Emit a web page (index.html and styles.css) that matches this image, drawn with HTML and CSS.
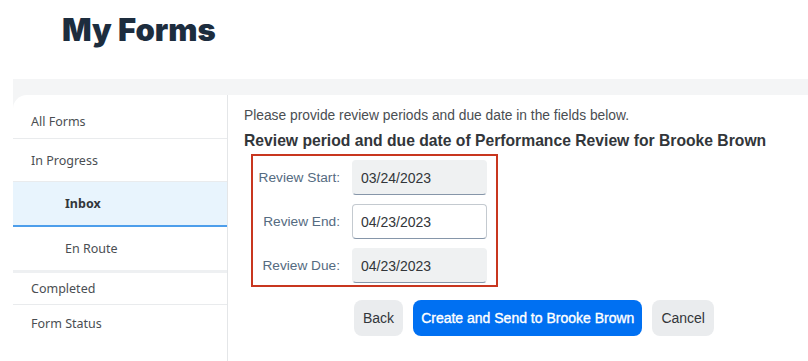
FILE: index.html
```html
<!DOCTYPE html>
<html lang="en">
<head>
    <meta charset="UTF-8">
    <meta name="viewport" content="width=device-width, initial-scale=1.0">
    <title>My Forms</title>
    <link rel="stylesheet" href="styles.css">
</head>
<body>
    <h1 class="page-title">My Forms</h1>

    <div class="page-band">
        <div class="panel">
            <!-- Left navigation -->
            <ul class="nav">
                <li class="nav-item all-forms">All Forms</li>
                <li class="nav-item in-progress">In Progress</li>
                <li class="nav-item sub active">Inbox</li>
                <li class="nav-item sub en-route">En Route</li>
                <li class="nav-item completed">Completed</li>
                <li class="nav-item form-status">Form Status</li>
            </ul>

            <!-- Form content -->
            <div class="content">
                <p class="intro">Please provide review periods and due date in the fields below.</p>
                <h2 class="form-heading">Review period and due date of Performance Review for Brooke Brown</h2>

                <div class="date-box">
                    <label class="field-label" for="start">Review Start:</label>
                    <input class="field readonly" id="start" type="text" value="03/24/2023" readonly>

                    <label class="field-label" for="end">Review End:</label>
                    <input class="field" id="end" type="text" value="04/23/2023">

                    <label class="field-label" for="due">Review Due:</label>
                    <input class="field readonly" id="due" type="text" value="04/23/2023" readonly>
                </div>

                <div class="actions">
                    <button class="btn">Back</button>
                    <button class="btn primary">Create and Send to Brooke Brown</button>
                    <button class="btn">Cancel</button>
                </div>
            </div>
        </div>
    </div>
</body>
</html>
```

FILE: styles.css
```css
body {
    font-family: "Liberation Sans", Arial, sans-serif;
    margin: 0;
    background: #fff;
    color: #32363a;
}
.page-title {
    margin: 0;
    padding: 10px 0 0 62px;
    height: 69px;
    box-sizing: border-box;
    font-family: Inter, "Liberation Sans", sans-serif;
    font-size: 31px;
    font-weight: 900;
    line-height: 40px;
    color: #1d2d3e;
}
.page-band {
    margin-top: 10px;
    margin-left: 13px;
    padding-top: 16px;
    background: #f4f5f6;
    height: 266px;
}
.panel {
    display: flex;
    background: #fff;
    border-top-left-radius: 14px;
    height: 100%;
}

/* navigation */
.nav {
    list-style: none;
    margin: 0;
    padding: 10px 0 0;
    width: 214px;
    border-right: 1px solid #e4e6e8;
    font-family: "Noto Sans", "Open Sans", sans-serif;
    font-size: 12.5px;
    color: #4a4e52;
}
.nav-item {
    display: flex;
    align-items: center;
    padding-left: 18px;
    border-bottom: 1px solid #e9ebed;
}
.nav-item.sub {
    padding-left: 52px;
}
.all-forms { height: 33px; }
.in-progress { height: 42px; }
.nav-item.active {
    height: 43px;
    background: #e8f4fd;
    border-bottom: 2px solid #4d9eeb;
    font-weight: bold;
    color: #32363a;
}
.en-route {
    height: 43px;
    border-bottom: 3px solid #eef0f2;
}
.completed { height: 31px; }
.form-status {
    height: 36px;
    border-bottom: none;
}

/* content */
.content {
    flex: 1;
    padding: 12px 0 0 16px;
}
.intro {
    margin: 0;
    font-size: 13.8px;
    line-height: 18px;
    color: #4a4e52;
}
.form-heading {
    margin: 6px 0 0;
    font-size: 15.7px;
    line-height: 20px;
    color: #32363a;
}
.date-box {
    display: grid;
    grid-template-columns: 87px 135px;
    column-gap: 12px;
    row-gap: 9px;
    align-items: center;
    width: 243px;
    margin: 3px 0 0 7px;
    padding: 4px 0 2px 0;
    border: 2px solid #c8361f;
}
.field-label {
    text-align: right;
    font-size: 13.7px;
    color: #556b81;
}
.field {
    box-sizing: border-box;
    height: 35px;
    padding: 0 8px;
    font-family: inherit;
    font-size: 14px;
    color: #32363a;
    background: #fff;
    border: 1px solid #c4cad0;
    border-bottom-color: #8696a9;
    border-radius: 4px;
    outline: none;
}
.field.readonly {
    background: #eff1f2;
    border-color: #eff1f2;
    border-bottom-color: #8696a9;
}
.actions {
    display: flex;
    gap: 10px;
    margin: 13px 0 0 110px;
}
.btn {
    height: 36px;
    padding: 0 9px;
    font-family: inherit;
    font-size: 14px;
    color: #32363a;
    background: #eaecee;
    border: none;
    border-radius: 8px;
}
.btn.primary {
    padding: 0 8px;
    background: #0070f2;
    color: #fff;
    -webkit-text-stroke: 0.35px #fff;
}
```
